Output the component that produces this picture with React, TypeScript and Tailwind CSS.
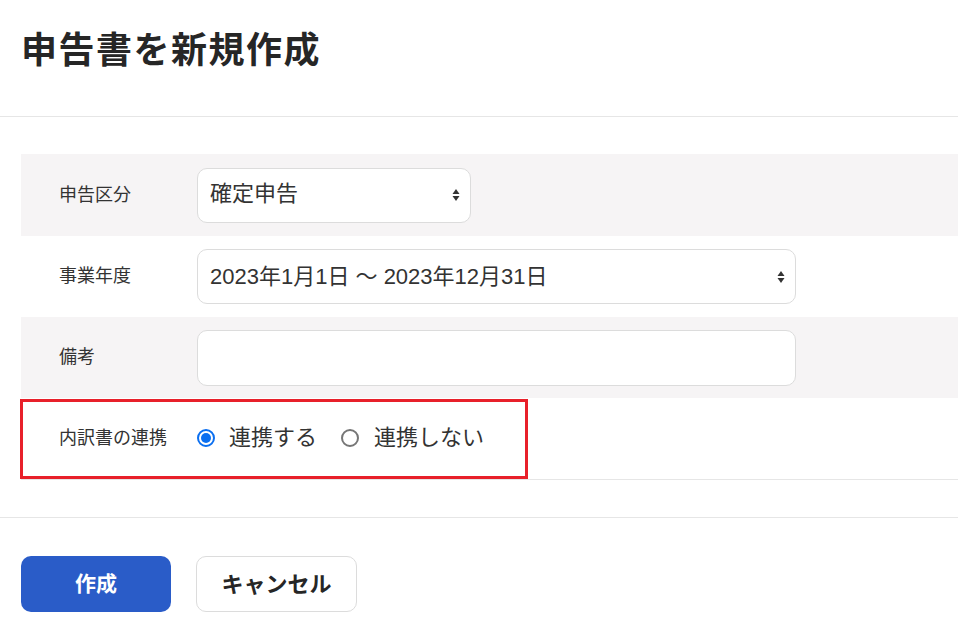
import React from "react";

const font = { fontFamily: '"Liberation Sans", "Noto Sans CJK JP", sans-serif' };

function Arrows() {
  return (
    <svg width="8" height="14" viewBox="0 0 8 14" className="shrink-0">
      <path d="M4 1 L7.5 6 L0.5 6 Z" fill="#333" />
      <path d="M4 13 L7.5 8 L0.5 8 Z" fill="#333" />
    </svg>
  );
}

function Radio({ checked }: { checked: boolean }) {
  return checked ? (
    <span className="w-[18px] h-[18px] rounded-full border-[2px] border-[#0b6ff0] flex items-center justify-center">
      <span className="w-[10px] h-[10px] rounded-full bg-[#0b6ff0]" />
    </span>
  ) : (
    <span className="w-[18px] h-[18px] rounded-full border-[2px] border-[#767676]" />
  );
}

export default function App() {
  return (
    <div className="w-[958px] h-[632px] bg-white text-[#333] overflow-hidden" style={font}>
      <div className="h-[117px] border-b border-[#e6e6e6] flex items-center pl-[21px] pb-[14px]">
        <h1 className="text-[36px] font-bold text-[#262626] tracking-[1.5px]">申告書を新規作成</h1>
      </div>
      <div className="ml-[21px] mt-[37px]">
        <div className="h-[82px] bg-[#f6f4f5] flex items-center">
          <div className="w-[176px] pl-[38px] text-[18px]">申告区分</div>
          <div className="w-[274px] h-[55px] bg-white border border-[#dcdcdc] rounded-[10px] flex items-center justify-between pl-[12px] pr-[10px]">
            <span className="text-[22px] pb-[4px]">確定申告</span>
            <Arrows />
          </div>
        </div>
        <div className="h-[81px] bg-white flex items-center">
          <div className="w-[176px] pl-[38px] text-[18px]">事業年度</div>
          <div className="w-[599px] h-[55px] bg-white border border-[#dcdcdc] rounded-[10px] flex items-center justify-between pl-[12px] pr-[10px]">
            <span className="text-[22px]">2023年1月1日 ～ 2023年12月31日</span>
            <Arrows />
          </div>
        </div>
        <div className="h-[81px] bg-[#f6f4f5] flex items-center">
          <div className="w-[176px] pl-[38px] text-[18px]">備考</div>
          <div className="w-[599px] h-[56px] bg-white border border-[#dcdcdc] rounded-[10px]" />
        </div>
        <div className="relative h-[82px] border-b border-[#e6e6e6] flex items-center pb-[2px]">
          <div className="w-[176px] pl-[38px] text-[18px] pt-[2px]">内訳書の連携</div>
          <label className="flex items-center gap-[14px]">
            <Radio checked />
            <span className="text-[22px]">連携する</span>
          </label>
          <label className="flex items-center gap-[15px] ml-[24px]">
            <Radio checked={false} />
            <span className="text-[22px]">連携しない</span>
          </label>
          <div className="absolute left-[-1px] top-[1px] w-[508px] h-[80px] border-[3px] border-[#e8202a]" />
        </div>
      </div>
      <div className="mt-[37px] border-t border-[#e6e6e6] pl-[21px] pt-[38px] flex gap-[25px]">
        <button className="w-[150px] h-[56px] rounded-[10px] bg-[#2a5cc8] text-white text-[21px] font-bold">作成</button>
        <button className="w-[161px] h-[56px] rounded-[10px] bg-white border border-[#dcdcdc] text-[#262626] text-[22px] font-bold">キャンセル</button>
      </div>
    </div>
  );
}
